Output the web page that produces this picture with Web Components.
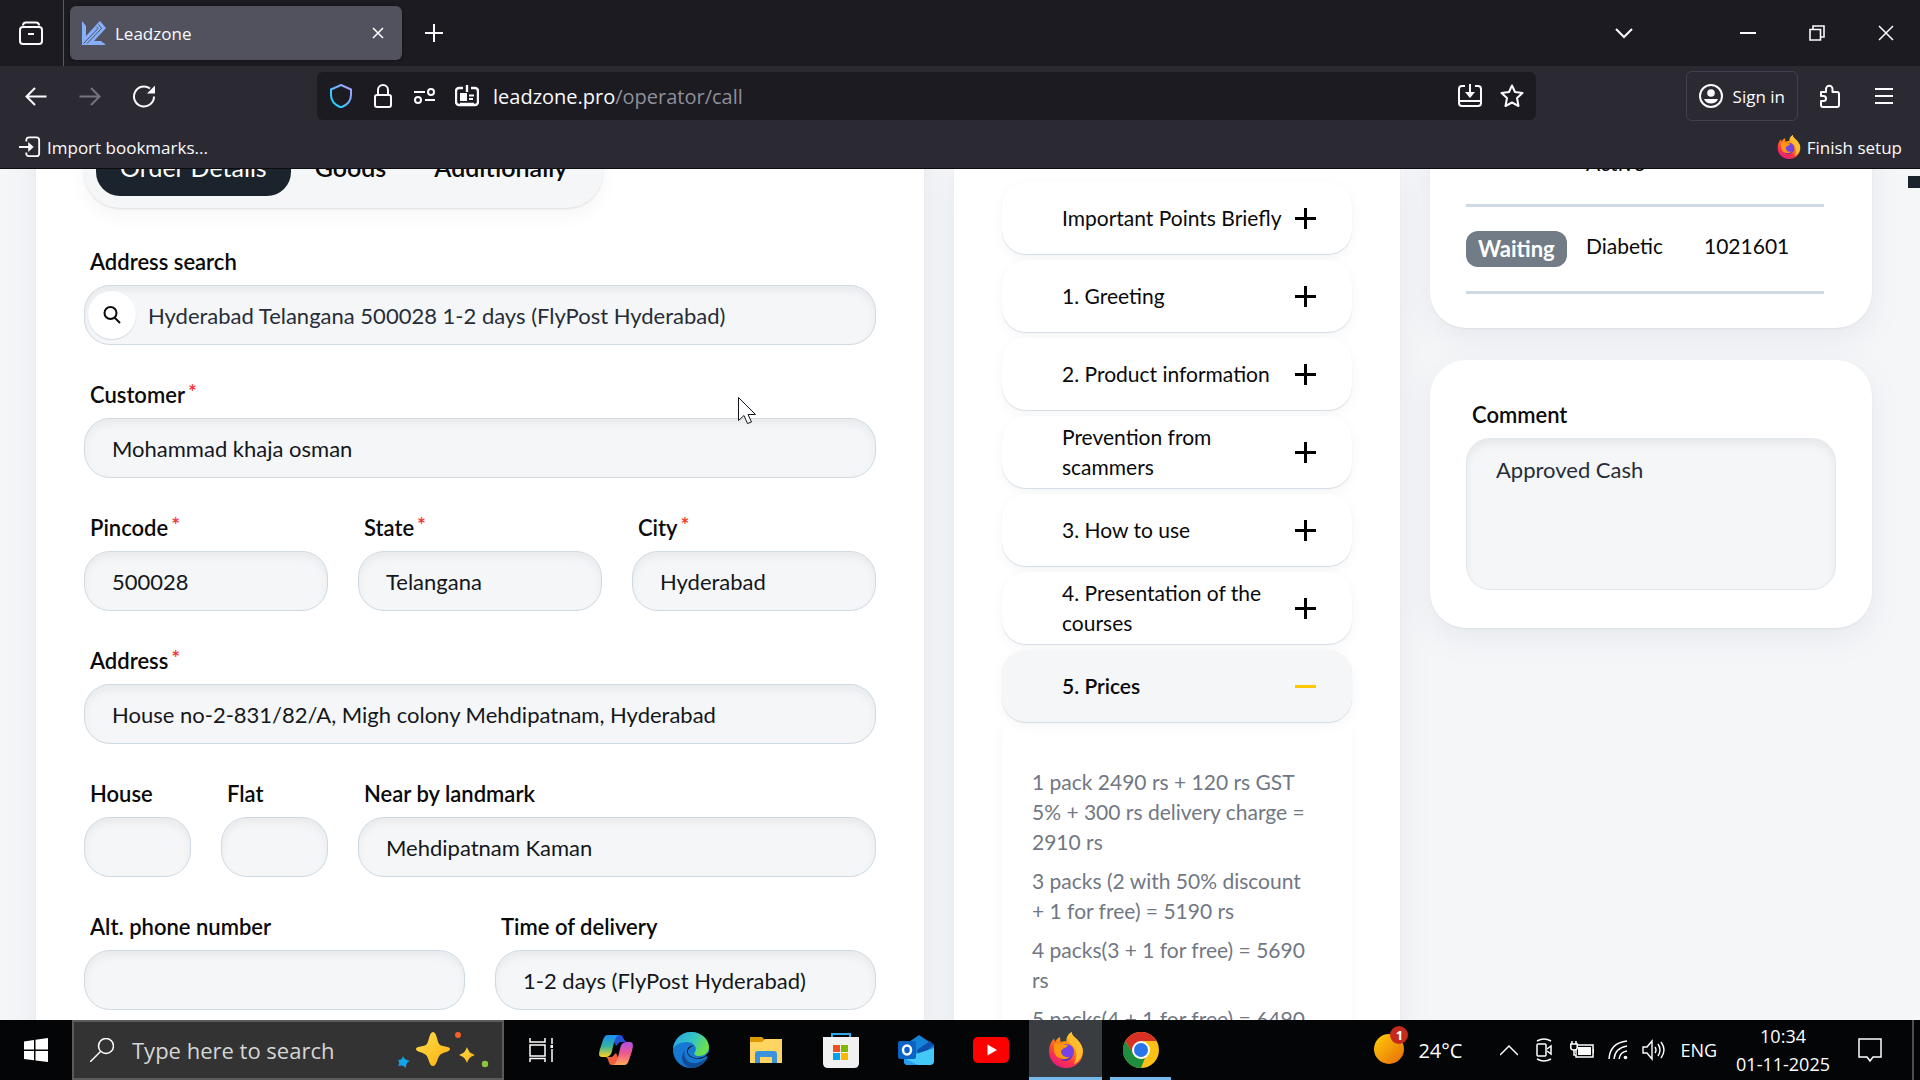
<!DOCTYPE html>
<html lang="en">
<head>
<meta charset="utf-8">
<title>Leadzone</title>
<style>
    html, body { height: 100%; margin: 0; }
    body {
        --ui-font: "Open Sans", "Noto Sans", sans-serif;
        --page-font: Lato, "Open Sans", sans-serif;
        --line: #ced9e3;
        --field: #f5f6f8;
        --dark: #1b242c;
        display: flex;
        flex-direction: column;
        overflow: hidden;
        background: #f5f6f8;
        font-family: var(--ui-font);
    }
</style>
</head>
<body>
    <lz-browser-tabs></lz-browser-tabs>
    <lz-toolbar></lz-toolbar>
    <lz-bookmarks></lz-bookmarks>

    <lz-page>
        <lz-order-form slot="order"></lz-order-form>

        <lz-script-list slot="script">
            <lz-script-item>Important Points Briefly</lz-script-item>
            <lz-script-item>1. Greeting</lz-script-item>
            <lz-script-item>2. Product information</lz-script-item>
            <lz-script-item>Prevention from scammers</lz-script-item>
            <lz-script-item>3. How to use</lz-script-item>
            <lz-script-item>4. Presentation of the courses</lz-script-item>
            <lz-script-item open>5. Prices
                <p slot="body">1 pack 2490 rs + 120 rs GST 5% + 300 rs delivery charge = 2910 rs</p>
                <p slot="body">3 packs (2 with 50% discount + 1 for free) = 5190 rs</p>
                <p slot="body">4 packs(3 + 1 for free) = 5690 rs</p>
                <p slot="body">5 packs(4 + 1 for free) = 6490 rs</p>
            </lz-script-item>
        </lz-script-list>

        <lz-orders slot="side"></lz-orders>
        <lz-comment slot="side" label="Comment" text="Approved Cash"></lz-comment>
    </lz-page>

    <lz-taskbar></lz-taskbar>
    <lz-cursor></lz-cursor>

<script>
(
    function () {

        // every drawing of the page: [viewBox size, markup]
        const fox =
            '<defs><linearGradient id="fa" x1=".8" y1="0" x2=".2" y2="1"><stop offset="0" stop-color="#fff44f"/><stop offset=".35" stop-color="#ff980e"/><stop offset=".7" stop-color="#ff3647"/><stop offset="1" stop-color="#e31587"/></linearGradient></defs>' +
            '<path fill="url(#fa)" d="M18 36C8 36 1 28.500 1 19C1 14 3 9.500 6 6.500L7 10C8 8 10 5.500 12 5L12.500 10C15 9 17 9 18.500 9.500C18 6 19.500 2.500 23.500 0C24 4 27 5 30 8.500C33 12 35 15 35 19.500C35 29 27.500 36 18 36Z"/>' +
            '<circle cx="18.500" cy="19.500" r="7.500" fill="#7542e5"/><path fill="#592acb" d="M13 24c4 4 12 3 13-4-1 9-11 12-15 5z"/>' +
            '<path fill="#ffbd2f" d="M23.500 0C24 4 27 5 30 8.500C34 13 35 17 34.500 21C33 27 30 30 26 32C30 25 29 17 24 13C20 10 20 4 23.500 0Z"/>' +
            '<path fill="#ff980e" d="M6 12c5-2 8 1 14 1-1 3-6 3-7 6 0 5 5 7 9 6-6 5-16 1-16-7z"/>';

        const icons = {
            view: [24, '<path d="M4 4.500Q4 1.500 7 1.500H17Q20 1.500 20 4.500"/><rect x="1" y="6" width="22" height="17" rx="3"/><path d="M9 13H15"/>'],
            logo: [24, '<path fill="#86b0fb" stroke="none" d="M0 0L4 5V15L14 4L18 0L24 7L12 20H19L24 24H0Z"/><path stroke="#52525e" stroke-width="1" d="M1.500 22.500L16 7.500L14 5.500M5 22.500L19.500 7.500L16.500 3.500"/>'],
            close: [12, '<path d="M1 1L11 11M11 1L1 11" stroke-width="1.600"/>'],
            plus: [18, '<path d="M9 0V18M0 9H18"/>'],
            chevron: [18, '<path d="M1 5L9 13L17 5"/>'],
            min: [16, '<path d="M0 8H16"/>'],
            restore: [16, '<path d="M1 4.500H11.500V15H1ZM4 4V1H15V12H12" stroke-width="1.600"/>'],
            winclose: [16, '<path d="M1 1L15 15M15 1L1 15" stroke-width="1.500"/>'],
            back: [24, '<path d="M22.500 12.500H3M11 4L2.500 12.500L11 21"/>'],
            forward: [24, '<path d="M1.500 12.500H21M13 4L21.500 12.500L13 21"/>'],
            reload: [24, '<path d="M18 4.500A10 10 0 1 0 22 12.500"/><path fill="currentColor" stroke="none" d="M23 1.500V9.500H15Z"/>'],
            shield: [24, '<defs><linearGradient id="sh" x1="1" y1="0" x2="0" y2="1"><stop offset="0" stop-color="#b49bff"/><stop offset=".5" stop-color="#5fb8ff"/><stop offset="1" stop-color="#00ddff"/></linearGradient></defs><path stroke="url(#sh)" d="M12 1L22 5.500V11C22 17 18 21 12 23.500C6 21 2 17 2 11V5.500Z"/>'],
            lock: [24, '<rect x="4" y="11" width="16" height="12" rx="2"/><path d="M7 11V6A5 5 0 0 1 17 6V11"/>'],
            perms: [24, '<path d="M1 8H12M12 16H22"/><circle cx="18" cy="8" r="3"/><circle cx="5" cy="16" r="3"/>'],
            card: [24, '<path d="M8 4H4A3 3 0 0 0 1 7V18A3 3 0 0 0 4 21H20A3 3 0 0 0 23 18V7A3 3 0 0 0 20 4H16M12 1V8M5 20H19" stroke-width="2.400"/><rect x="5" y="9" width="7" height="8" fill="currentColor" stroke="none"/><path d="M14 11.500H19M14 15H18"/>'],
            install: [24, '<path d="M7 2H4A3 3 0 0 0 1 5V19A3 3 0 0 0 4 22H20A3 3 0 0 0 23 19V5A3 3 0 0 0 20 2H17M1 17H23M12 0V9"/><path fill="currentColor" stroke="none" d="M7 8H17L12 14Z"/>'],
            star: [24, '<path stroke-linejoin="round" d="M12 1.500L15 8L22.500 9L17 14L18.500 22L12 18.500L5.500 22L7 14L1.500 9L9 8Z"/>'],
            user: [24, '<circle cx="12" cy="12" r="11"/><circle cx="12" cy="9" r="3.800" fill="currentColor" stroke="none"/><path fill="currentColor" stroke="none" d="M5 15H19C17 21 7 21 5 15Z"/>'],
            puzzle: [24, '<path stroke-linejoin="round" d="M3 8H8V5A3.200 3.200 0 0 1 14.500 5V8H19A2 2 0 0 1 21 10V21A2 2 0 0 1 19 23H5A2 2 0 0 1 3 21V17H5.500A2.500 2.500 0 0 0 5.500 12H3Z"/>'],
            menu: [20, '<path d="M1 3H19M1 10H19M1 17H19" stroke-width="1.800"/>'],
            import: [24, '<path d="M8 6V4A3 3 0 0 1 11 1.500H19A3 3 0 0 1 22 4.500V19A3 3 0 0 1 19 22H11A3 3 0 0 1 8 20V18M0 12H12"/><path fill="currentColor" stroke="none" d="M10 6.500L16 12L10 17.500Z"/>'],
            fox: [36, fox],
            search: [18, '<circle cx="7.500" cy="7" r="6"/><path d="M11.500 11.500L17 17"/>'],
            windows: [24, '<path fill="#fff" stroke="none" d="M0 3.500L10 2V11.500H0ZM11.500 1.700L24 0V11.500H11.500ZM0 13H10V22.300L0 21ZM11.500 13H24V24L11.500 22.400Z"/>'],
            find: [24, '<circle cx="16" cy="8" r="7.500" stroke-width="1.500"/><path d="M10.500 13.500L0 24" stroke-width="1.500"/>'],
            sparkles: [96, '<defs><linearGradient id="sp" x1="0" y1="0" x2="1" y2="1"><stop offset="0" stop-color="#ffdf4a"/><stop offset="1" stop-color="#fbaf10"/></linearGradient></defs>' +
                '<g stroke="none"><path fill="url(#sp)" d="M39 30C43 30 43 41 46 43C49 45 56 44 56 47C56 50 49 50 46 53C43 56 43 64 39 64C35 64 35 56 32 53C29 50 22 50 22 47C22 44 29 45 32 43C35 41 35 30 39 30Z"/>' +
                '<path fill="url(#sp)" d="M73 45C75 50 76 51 81 53C76 55 75 56 73 61C71 56 70 55 65 53C70 51 71 50 73 45Z"/>' +
                '<path fill="#12a3ea" d="M9 54C10 57 12 58 16 59C13 60 12 62 12 66C9 63 7 63 4 64C6 61 5 60 4 58C7 58 8 57 9 54Z"/>' +
                '<circle cx="64" cy="33" r="3" fill="#f4622a"/><circle cx="91" cy="62" r="3.200" fill="#8bc53f"/></g>'],
            taskview: [24, '<path stroke-width="1.500" d="M1 0V4H16V0M1 7H16V18H1ZM1 24V20.500H16V24M23 0V6M23 11V24"/><path stroke-width="3" d="M21.500 8.500H24.500"/>'],
            copilot: [36, '<defs><linearGradient id="ca" x1="0" y1="0" x2="0" y2="1"><stop offset="0" stop-color="#1b8ff0"/><stop offset=".5" stop-color="#32b2a4"/><stop offset="1" stop-color="#ffd21d"/></linearGradient><linearGradient id="cb" x1="0" y1="0" x2="0" y2="1"><stop offset="0" stop-color="#b14ee8"/><stop offset=".5" stop-color="#ee5a8a"/><stop offset="1" stop-color="#ffa85b"/></linearGradient></defs>' +
                '<g stroke="none"><path fill="#2152d6" d="M13 3H22C26 3 25 9 29 10H22L18 14Z"/><path fill="#f0603c" d="M23 33H14C10 33 11 26 8 25H14L18 21Z"/><path fill="url(#ca)" d="M10 3H21C17 4 16 11 14 19C13 23 11 25 7 25H4C0 25 1 21 2 17L5 8C6 5 7 3 10 3Z"/><path fill="url(#cb)" d="M26 33H15C19 32 20 25 22 17C23 12 25 10 29 10H32C36 10 35 15 34 19L31 28C30 31 29 33 26 33Z"/></g>'],
            edge: [36, '<defs><linearGradient id="ea" x1="0" y1="0" x2="1" y2=".4"><stop offset="0" stop-color="#26a0e6"/><stop offset=".6" stop-color="#36c6c0"/><stop offset="1" stop-color="#6be04c"/></linearGradient></defs>' +
                '<g stroke="none"><circle cx="18" cy="18" r="18" fill="#1579d2"/><path fill="url(#ea)" d="M0 17C1 7 9 0 18 0C28 0 36 7 36 15C36 21 31 24 26 24C22 24 20 22 22 20C25 15 20 10 14 10C7 10 2 13 0 17Z"/><path fill="#124a93" d="M12 18C9 26 16 33 24 31C28 30 31 28 33 26C29 34 23 36 18 36C10 34 6 26 12 18Z"/><path fill="#05070a" d="M21 14C17 14 14 18 15 21C17 26 25 28 32 24L36 20V26C34 24 33 24 32 25C25 29 15 26 14 20C14 16 17 13 21 14Z"/></g>'],
            folder: [36, '<g stroke="none"><path fill="#dd9a08" d="M2 5H14L17 8V12H2Z"/><path fill="#ffd461" d="M2 10H14L17 7H34V31H2Z"/><path fill="#3a92dc" d="M7 31V22Q7 19 10 19H26Q29 19 29 22V31H24V25H12V31Z"/></g>'],
            store: [36, '<path fill="none" stroke="#2fa9e8" stroke-width="2" d="M9 8V2H27V8"/><g stroke="none"><path fill="#f1f1f1" d="M0 5H36V31Q36 36 31 36H5Q0 36 0 31Z"/><path fill="#f05123" d="M10 13h7v7h-7z"/><path fill="#7eb900" d="M18 13h7v7h-7z"/><path fill="#00a2ed" d="M10 21h7v7h-7z"/><path fill="#ffb800" d="M18 21h7v7h-7z"/></g>'],
            outlook: [36, '<g stroke="none"><path fill="#1483d8" d="M8 12L21 3L36 13V20L20 27H8Z"/><path fill="#0c4fae" d="M19 18L32 9L36 13L21 25Z"/><path fill="#43c9f7" d="M6 26L36 16V29Q36 33 32 33H10Q6 33 6 29Z"/><path fill="#2a9cf0" d="M6 26L20 33H10Q6 33 6 29Z"/><rect y="9" width="18" height="18" rx="2" fill="#0b63c4"/></g><ellipse cx="9" cy="18" rx="4" ry="4.500" fill="none" stroke="#fff" stroke-width="2.500"/>'],
            youtube: [36, '<g stroke="none"><rect y="5" width="36" height="26" rx="5" fill="#f00"/><path fill="#fff" d="M14.500 12.500L24 18L14.500 23.500Z"/></g>'],
            chrome: [36, '<g stroke="none"><circle cx="18" cy="18" r="18" fill="#fbc116"/><path fill="#d93025" d="M2.400 9A18 18 0 0 1 33.600 9H18L10 22Z"/><path fill="#1e8e3e" d="M2.400 9L10.500 22.500L18 27L22 26L18 36A18 18 0 0 1 2.400 9Z"/><circle cx="18" cy="18" r="9" fill="#fff"/><circle cx="18" cy="18" r="7" fill="#2a74ea"/></g>'],
            sun: [36, '<defs><linearGradient id="su" x1="0" y1="0" x2="1" y2="1"><stop offset="0" stop-color="#ffcf0a"/><stop offset="1" stop-color="#e66a05"/></linearGradient></defs><circle cx="16" cy="20" r="15" stroke="none" fill="url(#su)"/>'],
            up: [18, '<path d="M0 14L9 5L18 14" stroke-width="1.500"/>'],
            meet: [24, '<path stroke-width="1.500" d="M5 3Q12 -1 19 3M5 21Q12 25 19 21"/><rect x="5" y="6" width="9" height="12" rx="1" stroke-width="1.500"/><path stroke-width="1.500" d="M15 11L19 8V16L15 13"/>'],
            battery: [24, '<rect x="6" y="7" width="17" height="12" stroke-width="1.500"/><path fill="currentColor" stroke="none" d="M8 9H21V17H8ZM23 11H24V15H23Z"/><path fill="#050607" stroke-width="1.500" d="M2 3V6M6 3V6M0.800 6H7.200V10Q7 12 4 12Q1 12 .8 10ZM4 12V17H6"/>'],
            wifi: [20, '<path stroke-width="1.400" d="M1 19Q2 3 19 1M6 19Q7 8 19 6M11 19Q12 12 19 11"/><circle cx="17.500" cy="17.500" r="1.800" fill="currentColor" stroke="none"/>'],
            volume: [24, '<path stroke-width="1.400" d="M1 9H5L10 3V21L5 15H1ZM13 9Q15 12 13 15M16 6Q20 12 16 18M19 4Q25 12 19 20"/>'],
            notes: [24, '<path stroke-width="1.500" d="M1 1H23V19H15L12 23L9 19H1Z"/>'],
            cursor: [27, '<path fill="#fff" stroke="#15151c" stroke-width="1" d="M.5 .5V23.500L6 18.500L9.500 26.500L13.500 25L10 17.500H17.500Z"/>']
        };

        /**
        * Registers an element whose shadow root is a clone of the given markup
        */
        function define(name, css, html, setup) {
            const template = document.createElement('template');
            template.innerHTML = '<style>:host { display: block; } * { box-sizing: border-box; } ' +
                'button { font: inherit; color: inherit; background: none; border: 0; padding: 0; display: flex; align-items: center; justify-content: center; } ' +
                css + '</style>' + html;

            customElements.define(name, class extends HTMLElement {
                constructor() {
                    super();
                    this.attachShadow({ mode: 'open' });
                    this.shadowRoot.appendChild(template.content.cloneNode(true));
                }

                connectedCallback() {
                    if (setup) {
                        setup(this, this.shadowRoot);
                    }
                }
            });
        }

        define('lz-icon', ':host { display: inline-block; flex: none; line-height: 0; }',
            '<svg fill="none" stroke="currentColor" stroke-width="2" aria-hidden="true"></svg>',
            function (host, root) {
                const icon = icons[host.getAttribute('name')];
                const size = host.getAttribute('size') || icon[0];
                const svg = root.querySelector('svg');
                svg.setAttribute('viewBox', '0 0 ' + icon[0] + ' ' + icon[0]);
                svg.setAttribute('width', size);
                svg.setAttribute('height', size);
                svg.innerHTML = icon[1];
                if (host.getAttribute('name') === 'fox') {
                    svg.setAttribute('stroke', 'none');
                }
            });

        /* ---- browser window ---- */

        define('lz-browser-tabs',
            ':host { display: flex; align-items: center; height: 66px; background: #1c1b22; color: #fbfbfe; font-size: 17px; }' +
            '.view { width: 64px; height: 66px; padding-right: 2px; border-right: 1px solid #5b5a63; }' +
            '.tab { display: flex; align-items: center; gap: 9px; width: 332px; height: 54px; margin-left: 6px; padding: 0 18px 0 12px; border-radius: 6px; background: #52525e; box-shadow: 0 0 3px #0008; }' +
            '.tab span { flex: 1; }' +
            '.new { width: 64px; height: 54px; }' +
            '.win { display: flex; margin-left: auto; }' +
            '.win button { width: 69px; height: 66px; } .win button:first-child { margin-right: 55px; }',
            '<button class="view" aria-label="View"><lz-icon name="view"></lz-icon></button>' +
            '<div class="tab"><lz-icon name="logo"></lz-icon><span>Leadzone</span><button aria-label="Close tab"><lz-icon name="close"></lz-icon></button></div>' +
            '<button class="new" aria-label="New tab"><lz-icon name="plus"></lz-icon></button>' +
            '<div class="win"><button aria-label="List tabs"><lz-icon name="chevron"></lz-icon></button>' +
            '<button aria-label="Minimize"><lz-icon name="min"></lz-icon></button>' +
            '<button aria-label="Restore"><lz-icon name="restore"></lz-icon></button>' +
            '<button aria-label="Close"><lz-icon name="winclose"></lz-icon></button></div>');

        define('lz-toolbar',
            ':host { display: grid; grid-template-columns: 293fr 1219fr 360fr; align-items: center; height: 60px; padding: 0 24px; background: #2b2a33; color: #fbfbfe; font-size: 17px; }' +
            '.nav { display: flex; gap: 30px; }' +
            '.off { color: #76757e; }' +
            '.url { display: flex; align-items: center; gap: 18px; height: 48px; padding: 0 12px; border-radius: 6px; background: #1c1b22; }' +
            '.url div { flex: 1; margin-left: -4px; font-size: 20px; } .url div span { color: #8f8f98; }' +
            '.end { display: flex; align-items: center; justify-content: flex-end; gap: 20px; }' +
            '.sign { gap: 10px; height: 50px; padding: 0 12px; border: 1px solid #42414d; border-radius: 6px; }' +
            '.menu { margin: 0 2px 0 12px; }',
            '<div class="nav"><button aria-label="Back"><lz-icon name="back"></lz-icon></button>' +
            '<button class="off" aria-label="Forward"><lz-icon name="forward"></lz-icon></button>' +
            '<button aria-label="Reload"><lz-icon name="reload"></lz-icon></button></div>' +
            '<div class="url"><lz-icon name="shield"></lz-icon><lz-icon name="lock"></lz-icon><lz-icon name="perms"></lz-icon><lz-icon name="card"></lz-icon>' +
            '<div>leadzone.pro<span>/operator/call</span></div>' +
            '<lz-icon name="install"></lz-icon><lz-icon name="star"></lz-icon></div>' +
            '<div class="end"><button class="sign"><lz-icon name="user"></lz-icon>Sign in</button>' +
            '<button aria-label="Extensions"><lz-icon name="puzzle"></lz-icon></button>' +
            '<button class="menu" aria-label="Menu"><lz-icon name="menu"></lz-icon></button></div>');

        define('lz-bookmarks',
            ':host { display: flex; justify-content: space-between; height: 43px; padding: 0 18px 0 19px; border-bottom: 1px solid #0c0c0d; box-sizing: border-box; background: #2b2a33; color: #fbfbfe; font-size: 17px; }' +
            'button { gap: 6px; }',
            '<button><lz-icon name="import" size="22"></lz-icon>Import bookmarks...</button>' +
            '<button><lz-icon name="fox" size="24"></lz-icon>Finish setup</button>');

        /* ---- page ---- */

        define('lz-page',
            ':host { display: flex; flex: 1; min-height: 0; overflow: hidden; font-family: var(--page-font); font-size: 21px; line-height: 30px; color: #0a0a0a; }' +
            'main { display: grid; grid-template-columns: 888fr 446fr 442fr; gap: 30px; flex: 1; padding: 0 36px; }' +
            '.side { display: flex; flex-direction: column; gap: 32px; }' +
            '.bar { width: 12px; padding-top: 7px; } .bar i { display: block; height: 12px; background: var(--dark); }',
            '<main><slot name="order"></slot><slot name="script"></slot><div class="side"><slot name="side"></slot></div></main>' +
            '<div class="bar"><i></i></div>');

        const card = 'background: #fff; box-shadow: 0 1px 2px #0000000d, 0 10px 30px #7184a01c; ';

        define('lz-field',
            ':host { display: flex; flex-direction: column; gap: 8px; min-width: 0; font-size: 22px; }' +
            'label { padding-left: 6px; font-weight: 600; } sup { margin-left: 3px; color: #f8312f; font-size: 21px; line-height: 0; vertical-align: 3px; }' +
            '.box { display: flex; align-items: center; height: 60px; padding-left: 3px; border: 1px solid var(--line); border-radius: 26px; background: var(--field); box-shadow: inset 0 5px 8px #0000000d; }' +
            'button { flex: none; width: 48px; height: 48px; border-radius: 24px; background: #fff; box-shadow: 0 1px 1px var(--line); }' +
            'input { flex: 1; min-width: 0; height: 48px; padding: 0 12px 0 24px; border: 0; outline: 0; background: none; font: inherit; color: #14171c; } button + input { padding-left: 12px; color: #262d38; }',
            '<label for="f"></label><div class="box"><input id="f" type="text"></div>',
            function (host, root) {
                const label = root.querySelector('label');
                label.textContent = host.getAttribute('label');
                if (host.hasAttribute('required')) {
                    label.insertAdjacentHTML('beforeend', '<sup>*</sup>');
                }
                root.querySelector('input').value = host.getAttribute('value') || '';
                if (host.hasAttribute('search')) {
                    root.querySelector('.box').insertAdjacentHTML('afterbegin', '<button aria-label="Search"><lz-icon name="search"></lz-icon></button>');
                }
            });

        define('lz-order-form',
            ':host { margin-top: -90px; padding: 47px 48px 0; ' + card + '}' +
            'nav { display: flex; width: fit-content; margin-bottom: 39px; padding: 12px; border-radius: 36px; background: var(--field); box-shadow: 0 1px 2px #0000001a, 0 8px 20px #0000000a; }' +
            'nav button { height: 58px; padding: 0 24px; border-radius: 24px; font-size: 25px; font-weight: 600; }' +
            'nav .on { background: var(--dark); color: #fff; font-weight: 400; }' +
            'form { display: grid; grid-template-columns: repeat(6, minmax(0, 1fr)); gap: 35px 30px; }' +
            '.w6 { grid-column: span 6; } .w4 { grid-column: span 4; } .w3 { grid-column: span 3; } .w2 { grid-column: span 2; }',
            '<nav><button class="on">Order Details</button><button>Goods</button><button>Additionally</button></nav>' +
            '<form>' +
            '<lz-field class="w6" label="Address search" search value="Hyderabad Telangana 500028 1-2 days (FlyPost Hyderabad)"></lz-field>' +
            '<lz-field class="w6" label="Customer" required value="Mohammad khaja osman"></lz-field>' +
            '<lz-field class="w2" label="Pincode" required value="500028"></lz-field>' +
            '<lz-field class="w2" label="State" required value="Telangana"></lz-field>' +
            '<lz-field class="w2" label="City" required value="Hyderabad"></lz-field>' +
            '<lz-field class="w6" label="Address" required value="House no-2-831/82/A, Migh colony Mehdipatnam, Hyderabad"></lz-field>' +
            '<lz-field label="House"></lz-field><lz-field label="Flat"></lz-field>' +
            '<lz-field class="w4" label="Near by landmark" value="Mehdipatnam Kaman"></lz-field>' +
            '<lz-field class="w3" label="Alt. phone number"></lz-field>' +
            '<lz-field class="w3" label="Time of delivery" value="1-2 days (FlyPost Hyderabad)"></lz-field>' +
            '</form>');

        define('lz-script-list',
            ':host { display: flex; flex-direction: column; gap: 6px; padding: 13px 48px 0; ' + card + '}',
            '<slot></slot>');

        define('lz-script-item',
            '.head { width: 100%; height: 72px; padding: 0 36px 0 60px; justify-content: space-between; border-radius: 24px; text-align: left; background: #fff; box-shadow: 0 1px 1px #d4dce6, 0 4px 14px #0000000a; }' +
            'section { display: none; padding: 45px 36px 0 30px; min-height: 360px; box-shadow: 0 8px 14px #0000000a; color: #717783; }' +
            ':host([open]) section { display: block; }' +
            ':host([open]) .head { position: relative; background: var(--field); font-weight: 600; }' +
            '.mark { flex: none; width: 21px; height: 21px; background: linear-gradient(#000, #000) center / 21px 3px no-repeat, linear-gradient(#000, #000) center / 3px 21px no-repeat; }' +
            ':host([open]) .mark { background: linear-gradient(#ffc700, #ffc700) center / 21px 3px no-repeat; }' +
            '::slotted(p) { margin: 0 0 9px; }',
            '<button class="head"><span><slot></slot></span><i class="mark"></i></button><section><slot name="body"></slot></section>');

        define('lz-orders',
            ':host { margin-top: -62px; padding: 41px 48px 34px 36px; border-radius: 36px; ' + card + '}' +
            'table { width: 100%; border-collapse: collapse; }' +
            'td { height: 87px; padding: 24px 0 0; border-bottom: 3px solid var(--line); vertical-align: top; }' +
            'tr:first-child td { height: 57px; padding: 0; }' +
            'td:first-child { width: 120px; } td:nth-child(2) { width: 118px; }' +
            '.badge { display: inline-block; height: 36px; padding: 3px 12px; border-radius: 12px; background: #717c87; color: #fff; font-size: 22px; font-weight: 700; }',
            '<table><tr><td></td><td>Active</td><td></td></tr>' +
            '<tr><td><span class="badge">Waiting</span></td><td>Diabetic</td><td>1021601</td></tr></table>');

        define('lz-comment',
            ':host { display: flex; flex-direction: column; gap: 8px; padding: 40px 36px 38px; border-radius: 36px; font-size: 22px; ' + card + '}' +
            'label { padding-left: 6px; font-weight: 600; }' +
            'textarea { display: block; height: 152px; padding: 16px 29px; border: 1px solid #e2e8ee; border-radius: 24px; resize: none; outline: 0; background: var(--field); box-shadow: inset 0 5px 8px #0000000f; font: inherit; color: #262d38; }',
            '<label for="c"></label><textarea id="c"></textarea>',
            function (host, root) {
                root.querySelector('label').textContent = host.getAttribute('label');
                root.querySelector('textarea').value = host.getAttribute('text');
            });

        /* ---- desktop ---- */

        define('lz-taskbar',
            ':host { display: flex; flex: none; height: 60px; background: #040507; color: #fff; font-size: 18px; }' +
            '.start { width: 72px; }' +
            '.find { display: flex; align-items: center; gap: 18px; width: 432px; padding-left: 16px; overflow: hidden; border: 2px solid #5b5b5b; background: #333; }' +
            '.find input { flex: 1; min-width: 0; padding: 0; border: 0; background: none; font: inherit; font-size: 22px; } .find input::placeholder { color: #d6d6d6; opacity: 1; }' +
            '.find lz-icon:last-child { margin-right: 12px; }' +
            '.apps { display: flex; gap: 2px; } .apps button { width: 73px; border: solid transparent; border-width: 3px 0; }' +
            '.apps .run { width: 61px; margin: 0 6px; border-bottom-color: #76b9ed; } .apps .on { border-bottom-color: #76b9ed; border-top-color: #393c41; background: #393c41; }' +
            '.tray { display: flex; align-items: center; margin-left: auto; gap: 14px; padding-right: 6px; }' +
            '.temp { gap: 9px; margin-right: 24px; font-size: 20px; } .sun { position: relative; } .sun b { position: absolute; right: 1px; top: -3px; width: 18px; height: 18px; border-radius: 9px; background: #c42b1c; font-size: 13px; line-height: 18px; text-align: center; }' +
            '.clock { margin: 0 14px 0 5px; line-height: 28px; text-align: center; }' +
            '.edge { width: 2px; height: 60px; margin-left: 16px; background: #4c4d4e; }',
            '<button class="start" aria-label="Start"><lz-icon name="windows"></lz-icon></button>' +
            '<div class="find"><lz-icon name="find"></lz-icon><input type="text" aria-label="Search" placeholder="Type here to search"><lz-icon name="sparkles"></lz-icon></div>' +
            '<div class="apps"><button aria-label="Task view"><lz-icon name="taskview"></lz-icon></button>' +
            '<button aria-label="Copilot"><lz-icon name="copilot"></lz-icon></button>' +
            '<button aria-label="Edge"><lz-icon name="edge"></lz-icon></button>' +
            '<button aria-label="Explorer"><lz-icon name="folder"></lz-icon></button>' +
            '<button aria-label="Store"><lz-icon name="store"></lz-icon></button>' +
            '<button aria-label="Outlook"><lz-icon name="outlook"></lz-icon></button>' +
            '<button aria-label="YouTube"><lz-icon name="youtube"></lz-icon></button>' +
            '<button class="on" aria-label="Firefox"><lz-icon name="fox"></lz-icon></button>' +
            '<button class="run" aria-label="Chrome"><lz-icon name="chrome"></lz-icon></button></div>' +
            '<div class="tray"><button class="temp"><span class="sun"><lz-icon name="sun"></lz-icon><b>1</b></span>24°C</button>' +
            '<lz-icon name="up"></lz-icon><lz-icon name="meet"></lz-icon><lz-icon name="battery"></lz-icon><lz-icon name="wifi"></lz-icon><lz-icon name="volume"></lz-icon>' +
            '<span>ENG</span><div class="clock">10:34<br>01-11-2025</div><lz-icon name="notes"></lz-icon><i class="edge"></i></div>');

        define('lz-cursor', ':host { position: absolute; left: 738px; top: 397px; pointer-events: none; line-height: 0; }',
            '<lz-icon name="cursor"></lz-icon>');

    }
)();
</script>
</body>
</html>
